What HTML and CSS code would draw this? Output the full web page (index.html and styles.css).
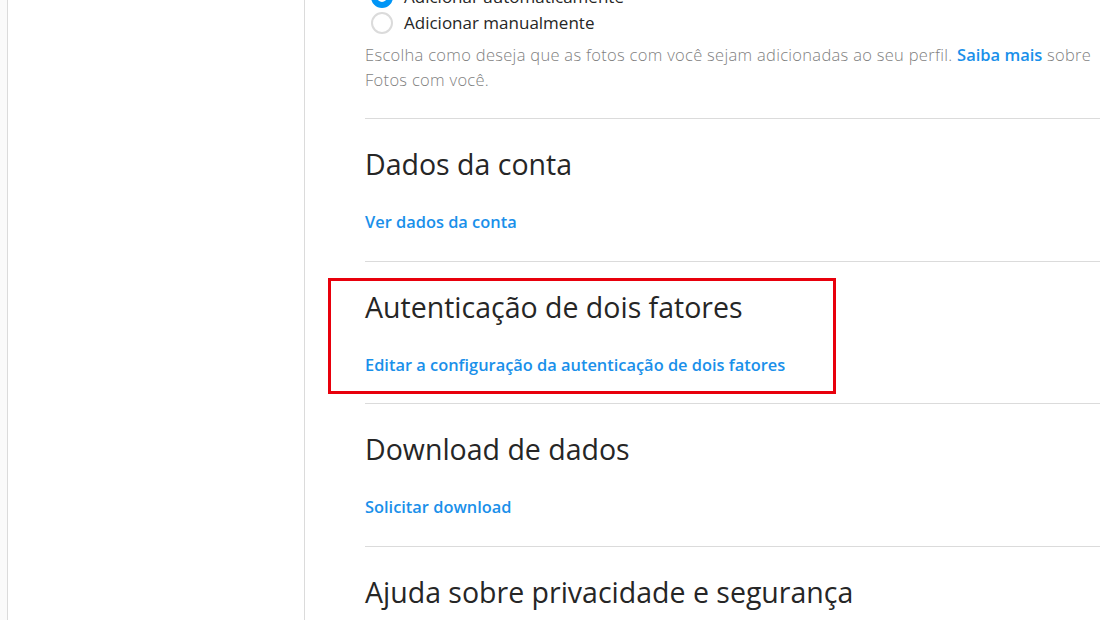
FILE: index.html
```html
<!DOCTYPE html>
<html lang="pt-BR">
<head>
<meta charset="utf-8">
<title>Privacidade e segurança</title>
<link rel="stylesheet" href="styles.css">
</head>
<body>
<div class="page">
  <div class="rail"></div>
  <nav class="sidebar"></nav>
  <main class="content">
    <section class="block photos">
      <label class="option"><span class="radio checked"></span>Adicionar automaticamente</label>
      <label class="option"><span class="radio"></span>Adicionar manualmente</label>
      <p class="hint">Escolha como deseja que as fotos com você sejam adicionadas ao seu perfil. <a class="link" href="#">Saiba mais</a> sobre Fotos com você.</p>
    </section>
    <section class="block">
      <h2 class="title">Dados da conta</h2>
      <a class="action" href="#">Ver dados da conta</a>
    </section>
    <section class="block marked">
      <h2 class="title">Autenticação de dois fatores</h2>
      <a class="action" href="#">Editar a configuração da autenticação de dois fatores</a>
      <span class="mark"></span>
    </section>
    <section class="block">
      <h2 class="title">Download de dados</h2>
      <a class="action" href="#">Solicitar download</a>
    </section>
    <section class="block">
      <h2 class="title">Ajuda sobre privacidade e segurança</h2>
      <a class="action" href="#">Central de Ajuda</a>
    </section>
  </main>
</div>
</body>
</html>
```

FILE: styles.css
```css
html, body {
  margin: 0;
  padding: 0;
  background: #ffffff;
}

body {
  font-family: "Open Sans", "Noto Sans", sans-serif;
  color: #262626;
}

.page {
  display: flex;
  height: 620px;
  overflow: hidden;
}

.rail {
  width: 7px;
  flex: none;
  background: #fafafa;
  border-right: 1px solid #dbdbdb;
}

.sidebar {
  width: 296px;
  flex: none;
  border-right: 1px solid #dbdbdb;
}

.content {
  flex: 1;
  padding-left: 60px;
  margin-top: -17px;
}

.block {
  position: relative;
  border-bottom: 1px solid #dbdbdb;
  padding: 27px 0 29px;
}

.block.photos {
  padding: 0 0 26px;
}

.block.marked {
  padding-bottom: 28px;
}

.option {
  display: flex;
  align-items: center;
  height: 26px;
  font-size: 17px;
  color: #262626;
}

.radio {
  width: 22px;
  height: 22px;
  box-sizing: border-box;
  border-radius: 50%;
  border: 2px solid #dbdbdb;
  margin: 2px 11px 0 6px;
  flex: none;
}

.radio.checked {
  border: 6px solid #0095f6;
}

.hint {
  margin: 7px 0 0;
  font-size: 16.5px;
  line-height: 25px;
  font-weight: 300;
  letter-spacing: 0.3px;
  color: #7f7f7f;
  padding-right: 2px;
}

.link {
  color: #1a90ea;
  font-weight: 600;
  letter-spacing: 0;
  text-decoration: none;
}

.title {
  margin: 0;
  font-size: 28.5px;
  line-height: 36px;
  font-weight: 400;
  color: #262626;
}

.action {
  display: block;
  margin-top: 30px;
  font-size: 16.4px;
  line-height: 20px;
  font-weight: 600;
  color: #1a90ea;
  text-decoration: none;
}

.mark {
  position: absolute;
  left: -37px;
  top: 16px;
  width: 508px;
  bottom: 9px;
  box-sizing: border-box;
  border: 3px solid #e8000c;
}
```
